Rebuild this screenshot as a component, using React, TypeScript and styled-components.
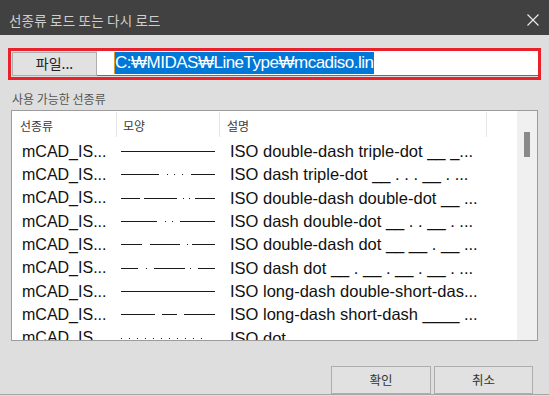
import styled, { createGlobalStyle } from "styled-components"

const GlobalStyle = createGlobalStyle`
    html, body {
        margin: 0;
        padding: 0;
        background: #dedede;
    }
    body {
        width: 549px;
        height: 396px;
        overflow: hidden;
        font-family: "Noto Sans CJK KR", "Liberation Sans", sans-serif;
    }
`

const Window = styled.div`
    width: 549px;
    height: 396px;
    display: flex;
    flex-direction: column;
`

const TitleBar = styled.div`
    height: 35px;
    flex: none;
    background: #414141;
    display: flex;
    align-items: center;
    justify-content: space-between;
    padding: 4px 10px 0 9px;
    box-sizing: border-box;
`

const Title = styled.span`
    color: #cfcfcf;
    font-size: 13.5px;
    letter-spacing: 0.2px;
`

const Body = styled.div`
    height: 359px;
    flex: none;
    background: #dedede;
    border-bottom: 1px solid #a6a6a6;
    overflow: hidden;
    display: flex;
    flex-direction: column;
`

const FileBox = styled.div`
    margin: 13px 0 0 8px;
    width: 533px;
    height: 32px;
    box-sizing: border-box;
    border: 3px solid #e8212b;
    display: flex;
`

const FileButton = styled.button`
    width: 85px;
    height: 24px;
    margin: 1px 0 0 1px;
    box-sizing: border-box;
    border: 1px solid #adadad;
    background: #e1e1e1;
    font-family: "Noto Sans CJK KR", sans-serif;
    font-size: 14px;
    color: #222;
    padding: 0 0 2px 0;
`

const PathInput = styled.div`
    flex: 1;
    height: 25px;
    box-sizing: border-box;
    background: #fff;
    border-bottom: 1px solid #6a5ad8;
    padding: 1px 0 0 17px;
    display: flex;
    align-items: flex-start;
`

const Selected = styled.span`
    display: inline-block;
    height: 22px;
    line-height: 22px;
    background: #0078d7;
    color: #fff;
    border-left: 1px solid #e09a2c;
    font-family: "Liberation Sans", "Noto Sans CJK KR", sans-serif;
    font-size: 17px;
    letter-spacing: -0.5px;
    white-space: nowrap;
`

const GroupLabel = styled.div`
    margin: 11px 0 0 12px;
    height: 16px;
    line-height: 16px;
    font-size: 12px;
    color: #555;
`

const ListBox = styled.div`
    margin: 3px 0 0 11px;
    width: 527px;
    height: 232px;
    box-sizing: border-box;
    border: 1px solid #9c9c9c;
    background: #fff;
    display: flex;
    overflow: hidden;
`

const Table = styled.div`
    flex: 1;
    overflow: hidden;
`

const Columns = styled.div`
    display: grid;
    grid-template-columns: 104px 103px 267px 1fr;
`

const HeaderRow = styled(Columns)`
    height: 29px;
`

const HeaderCell = styled.div<{ $divider?: boolean; $pad: number }>`
    position: relative;
    display: flex;
    align-items: center;
    padding-left: ${({ $pad }) => $pad}px;
    font-size: 12px;
    color: #3a3a3a;
    &::before {
        content: "";
        display: ${({ $divider }) => ($divider ? "block" : "none")};
        position: absolute;
        left: 0;
        top: 1px;
        height: 25px;
        width: 1px;
        background: #e6e6e6;
    }
`

const Row = styled(Columns)`
    height: 23.33px;
    align-items: center;
`

const NameCell = styled.div`
    padding-left: 10px;
    font-family: "Liberation Sans", sans-serif;
    font-size: 16px;
    color: #111;
    white-space: nowrap;
`

const ShapeCell = styled.div`
    padding-left: 5px;
    display: flex;
    align-items: center;
`

const DescCell = styled.div`
    padding-left: 11px;
    font-family: "Liberation Sans", sans-serif;
    font-size: 16.5px;
    color: #111;
    white-space: nowrap;
    overflow: hidden;
`

const ScrollTrack = styled.div`
    width: 20px;
    flex: none;
    background: #f0f0f0;
    display: flex;
    justify-content: center;
    padding-top: 21px;
    box-sizing: border-box;
`

const ScrollThumb = styled.div`
    width: 6px;
    height: 25px;
    background: #8a8a8a;
`

const Footer = styled.div`
    margin: 25px 0 0 331px;
    display: flex;
    gap: 3px;
`

const DialogButton = styled.button<{ $width: number }>`
    width: ${({ $width }) => $width}px;
    height: 28px;
    box-sizing: border-box;
    border: 1px solid #adadad;
    background: #e1e1e1;
    font-family: "Noto Sans CJK KR", sans-serif;
    font-size: 12.5px;
    color: #333;
    padding: 0;
`

type Seg = [number, number]

const dots = (from: number, to: number, step: number): Seg[] => {
    const out: Seg[] = []
    for (let x = from; x <= to; x += step) out.push([x, x + 1])
    return out
}

const rows: { name: string; shape: Seg[]; desc: string }[] = [
    { name: "mCAD_IS...", shape: [[0, 94]], desc: "ISO double-dash triple-dot __ _..." },
    { name: "mCAD_IS...", shape: [[0, 38], [46, 47], [53, 54], [61, 62], [70, 94]], desc: "ISO dash triple-dot __ . . . __ . ..." },
    { name: "mCAD_IS...", shape: [[0, 19], [23, 56], [62, 63], [68, 69], [74, 94]], desc: "ISO double-dash double-dot __ ..." },
    { name: "mCAD_IS...", shape: [[0, 36], [44, 45], [51, 52], [59, 94]], desc: "ISO dash double-dot __ . . __ . ..." },
    { name: "mCAD_IS...", shape: [[0, 21], [29, 59], [66, 67], [71, 94]], desc: "ISO double-dash dot __ __ . __ ..." },
    { name: "mCAD_IS...", shape: [[0, 17], [25, 26], [33, 64], [69, 70], [77, 94]], desc: "ISO dash dot __ . __ . __ . __ . ..." },
    { name: "mCAD_IS...", shape: [[0, 94]], desc: "ISO long-dash double-short-das..." },
    { name: "mCAD_IS...", shape: [[0, 34], [41, 56], [63, 94]], desc: "ISO long-dash short-dash ____ ..." },
    { name: "mCAD_IS...", shape: dots(0, 82, 8), desc: "ISO dot . . . . . . . . . . . . . ..." },
]

const LineSample = ({ segs }: { segs: Seg[] }) => (
    <svg width="94" height="3" shapeRendering="crispEdges">
        {segs.map(([a, b], i) => (
            <rect key={i} x={a} y={1} width={b - a} height={1} fill="#1a1a1a" />
        ))}
    </svg>
)

const CloseIcon = () => (
    <svg width="12" height="12" viewBox="0 0 12 12">
        <path d="M0.5 0.5 L11.5 11.5 M11.5 0.5 L0.5 11.5" stroke="#ececec" strokeWidth="1.1" fill="none" />
    </svg>
)

export default function App() {
    return (
        <>
            <GlobalStyle />
            <Window>
                <TitleBar>
                    <Title>선종류 로드 또는 다시 로드</Title>
                    <CloseIcon />
                </TitleBar>
                <Body>
                    <FileBox>
                        <FileButton>파일...</FileButton>
                        <PathInput>
                            <Selected>C:₩MIDAS₩LineType₩mcadiso.lin</Selected>
                        </PathInput>
                    </FileBox>
                    <GroupLabel>사용 가능한 선종류</GroupLabel>
                    <ListBox>
                        <Table>
                            <HeaderRow>
                                <HeaderCell $pad={8}>선종류</HeaderCell>
                                <HeaderCell $pad={7} $divider>모양</HeaderCell>
                                <HeaderCell $pad={8} $divider>설명</HeaderCell>
                                <HeaderCell $pad={0} $divider />
                            </HeaderRow>
                            {rows.map((r, i) => (
                                <Row key={i}>
                                    <NameCell>{r.name}</NameCell>
                                    <ShapeCell>
                                        <LineSample segs={r.shape} />
                                    </ShapeCell>
                                    <DescCell>{r.desc}</DescCell>
                                    <div />
                                </Row>
                            ))}
                        </Table>
                        <ScrollTrack>
                            <ScrollThumb />
                        </ScrollTrack>
                    </ListBox>
                    <Footer>
                        <DialogButton $width={100}>확인</DialogButton>
                        <DialogButton $width={99}>취소</DialogButton>
                    </Footer>
                </Body>
            </Window>
        </>
    )
}
